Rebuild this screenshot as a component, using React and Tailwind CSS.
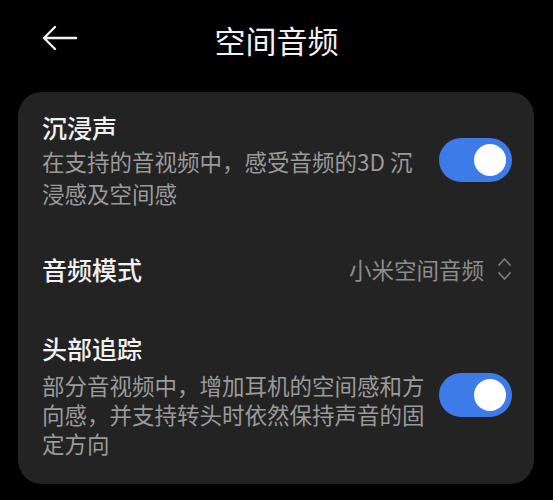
import React, { useState } from "react";

const font = { fontFamily: '"Noto Sans CJK SC", "Noto Sans", sans-serif' };

function Toggle({ on, onChange }) {
  return (
    <button
      onClick={() => onChange(!on)}
      className={`shrink-0 w-[73px] h-[44px] rounded-full flex items-center px-[6px] ${
        on ? "bg-[#3d7be8] justify-end" : "bg-[#4a4a4a] justify-start"
      }`}
    >
      <span className="block w-[32px] h-[32px] rounded-full bg-white" />
    </button>
  );
}

export default function App() {
  const [immersive, setImmersive] = useState(true);
  const [tracking, setTracking] = useState(true);

  return (
    <div className="w-[553px] h-[500px] bg-black text-[#f2f2f2] overflow-hidden" style={font}>
      {/* header */}
      <div className="relative h-[76px] flex items-center justify-center">
        <svg
          className="absolute left-[42px] top-[25px]"
          width="36"
          height="26"
          viewBox="0 0 36 26"
          fill="none"
          stroke="#f2f2f2"
          strokeWidth="2.4"
          strokeLinecap="round"
          strokeLinejoin="round"
        >
          <path d="M34 13H2M13 2L2 13l11 11" />
        </svg>
        <h1 className="text-[31px] leading-[40px] mt-[4px]">空间音频</h1>
      </div>

      {/* card */}
      <div className="mx-[18px] mt-[16px] w-[516px] rounded-[24px] bg-[#232323] pl-[24px] pr-[22px] pt-[19px] pb-[26px]">
        <div className="flex items-center justify-between">
          <div>
            <div className="text-[25px] leading-[32px] font-medium">沉浸声</div>
            <div className="mt-[2px] text-[22.5px] leading-[32px] text-[#9a9a9a]">
              在支持的音视频中，感受音频的3D 沉
              <br />
              浸感及空间感
            </div>
          </div>
          <Toggle on={immersive} onChange={setImmersive} />
        </div>

        <div className="mt-[44px] flex items-center justify-between">
          <div className="text-[25px] leading-[32px] font-medium">音频模式</div>
          <div className="flex items-center gap-[13px] text-[#8c8c8c]">
            <span className="text-[22.5px] leading-[32px]">小米空间音频</span>
            <svg
              width="15"
              height="26"
              viewBox="0 0 15 26"
              fill="none"
              stroke="#7a7a7a"
              strokeWidth="1.8"
              strokeLinecap="round"
              strokeLinejoin="round"
            >
              <path d="M2 9l5.5-6L13 9M2 17l5.5 6L13 17" />
            </svg>
          </div>
        </div>

        <div className="mt-[47px] flex items-center justify-between">
          <div>
            <div className="text-[25px] leading-[32px] font-medium">头部追踪</div>
            <div className="mt-[7px] text-[22.5px] leading-[29px] text-[#9a9a9a]">
              部分音视频中，增加耳机的空间感和方
              <br />
              向感，并支持转头时依然保持声音的固
              <br />
              定方向
            </div>
          </div>
          <Toggle on={tracking} onChange={setTracking} />
        </div>
      </div>
    </div>
  );
}
